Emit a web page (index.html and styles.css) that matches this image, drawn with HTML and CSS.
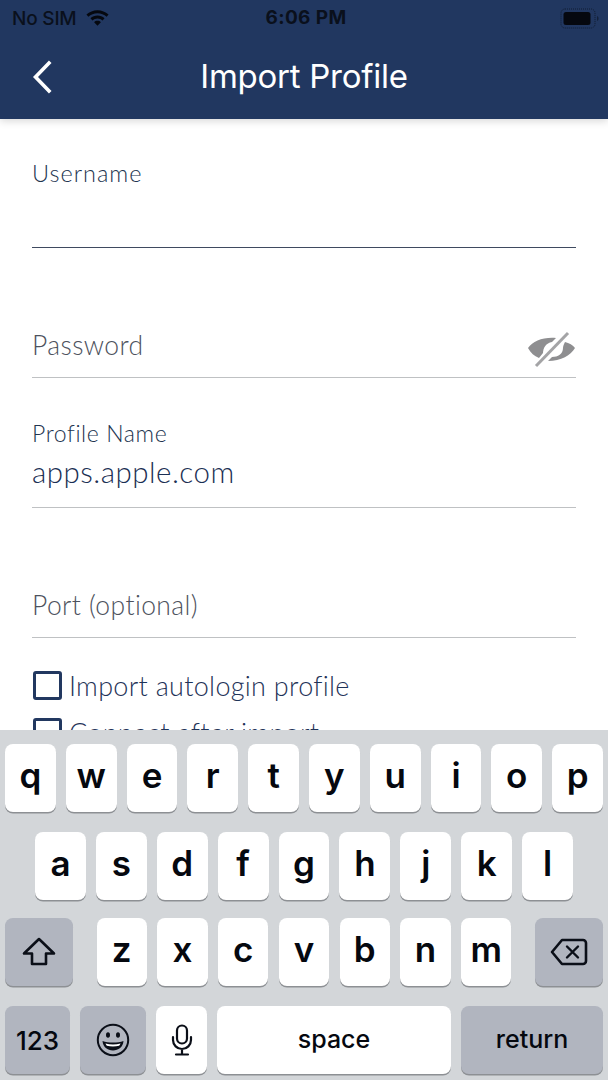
FILE: index.html
```html
<!DOCTYPE html>
<html lang="en">
<head>
<meta charset="utf-8">
<title>Import Profile</title>
<link rel="stylesheet" href="styles.css">
</head>
<body>
<div class="screen">
  <header class="header">
    <div class="status">
      <div class="status-left">
        <span>No SIM</span>
        <svg class="wifi" viewBox="0 0 26 20"><path d="M13 3C8.600 3 4.700 4.700 1.500 7.500L3.500 9.800C6.100 7.400 9.400 6 13 6s6.900 1.400 9.500 3.800l2-2.300C21.300 4.700 17.400 3 13 3zM13 8.500c-2.800 0-5.300 1-7.300 2.800l2 2.300c1.400-1.300 3.300-2.100 5.300-2.100s3.900.8 5.300 2.100l2-2.300c-2-1.800-4.500-2.800-7.300-2.800zM13 14c-1.400 0-2.600.5-3.500 1.400L13 19l3.500-3.600C15.600 14.500 14.400 14 13 14z"/></svg>
      </div>
      <span class="status-time">6:06 PM</span>
      <svg class="battery" viewBox="0 0 40 21"><rect x="1" y="1" width="34" height="19" rx="4" fill="none" stroke="#0a1220" stroke-width="1" stroke-dasharray="1 1" opacity=".7"/><rect x="3.500" y="4" width="27" height="13" rx="2.500" fill="#05080f"/><path d="M37 8v5c1-.4 1.500-1.200 1.500-2.500S38 8.400 37 8z" fill="#0a1220" opacity=".6"/></svg>
    </div>
    <div class="nav">
      <svg class="back" viewBox="0 0 20 34"><path d="M17 3 3.500 17 17 31" fill="none" stroke="#fff" stroke-width="3.600" stroke-linecap="square"/></svg>
      <h1 class="title">Import Profile</h1>
    </div>
  </header>

  <main class="form">
    <div class="field field-active">
      <span class="label">Username</span>
    </div>
    <div class="field">
      <span class="placeholder">Password</span>
      <svg class="eye" viewBox="0 0 48 38"><path d="M0 18C5 11 15 7 28 8L24 12C18 13 15 18 15 23L11 28C6 26 3 23 0 18z" fill="#8e8e90"/><path d="M37 12C41 13 45 15 47 18C43 25 33 31 20 31L24 27C30 27 35 24 35 18C35 16 36 14 37 12z" fill="#8e8e90"/><path d="M40 3 8 36" stroke="#a4a4a6" stroke-width="3" fill="none"/></svg>
    </div>
    <div class="field">
      <span class="label label-profile">Profile Name</span>
      <span class="value">apps.apple.com</span>
    </div>
    <div class="field">
      <span class="placeholder">Port (optional)</span>
    </div>
    <label class="check"><span class="box"></span>Import autologin profile</label>
    <label class="check"><span class="box"></span>Connect after import</label>
  </main>

  <section class="keyboard">
    <div class="row row-top">
      <div class="key">q</div><div class="key">w</div><div class="key">e</div><div class="key">r</div><div class="key">t</div><div class="key">y</div><div class="key">u</div><div class="key">i</div><div class="key">o</div><div class="key">p</div>
    </div>
    <div class="row row-mid">
      <div class="key">a</div><div class="key">s</div><div class="key">d</div><div class="key">f</div><div class="key">g</div><div class="key">h</div><div class="key">j</div><div class="key">k</div><div class="key">l</div>
    </div>
    <div class="row row-low">
      <div class="key key-dark key-shift">
        <svg class="ico-shift" viewBox="0 0 34 30"><path d="M17 2 2 16.500h8V27h14V16.500h8z" fill="none" stroke="#0b0f18" stroke-width="2.600" stroke-linejoin="round"/></svg>
      </div>
      <div class="letters">
        <div class="key">z</div><div class="key">x</div><div class="key">c</div><div class="key">v</div><div class="key">b</div><div class="key">n</div><div class="key">m</div>
      </div>
      <div class="key key-dark key-shift">
        <svg class="ico-del" viewBox="0 0 38 28"><path d="M12 2h21a3 3 0 0 1 3 3v18a3 3 0 0 1-3 3H12L2 14z" fill="none" stroke="#0b0f18" stroke-width="2.600" stroke-linejoin="round"/><path d="M17 8.500 28 19.500M28 8.500 17 19.500" stroke="#0b0f18" stroke-width="2.400" stroke-linecap="round"/></svg>
      </div>
    </div>
    <div class="row row-bottom">
      <div class="key key-dark key-num">123</div>
      <div class="key key-dark key-emoji">
        <svg class="ico-emoji" viewBox="0 0 34 34"><circle cx="17" cy="17" r="15.200" fill="none" stroke="#0b0f18" stroke-width="2"/><ellipse cx="12" cy="12" rx="2" ry="2.800" fill="#0b0f18"/><ellipse cx="22" cy="12" rx="2" ry="2.800" fill="#0b0f18"/><path d="M6.500 18c3 1 6.500 1.500 10.500 1.500S24.500 19 27.500 18C27 24 22.500 27.500 17 27.500S7 24 6.500 18z" fill="#0b0f18"/><path d="M9.500 20.500c2.300.6 4.800.9 7.500.9s5.200-.3 7.500-.9c-.3 1-.8 1.700-1.400 2.300-1.800.4-3.900.6-6.100.6s-4.300-.2-6.100-.6c-.6-.6-1.100-1.300-1.400-2.300z" fill="#fff"/></svg>
      </div>
      <div class="key key-mic">
        <svg class="ico-mic" viewBox="0 0 22 32"><rect x="6" y="1.500" width="10" height="18" rx="5" fill="none" stroke="#0b0f18" stroke-width="2.200"/><path d="M2 13v3a9 9 0 0 0 18 0v-3M11 25v5M5 30.500h12" fill="none" stroke="#0b0f18" stroke-width="2.200" stroke-linecap="round"/></svg>
      </div>
      <div class="key key-space">space</div>
      <div class="key key-dark key-return">return</div>
    </div>
  </section>
</div>
</body>
</html>
```
FILE: styles.css
```css
* { box-sizing: border-box; }
html, body { margin: 0; padding: 0; background: #fff; }
body { font-family: "Lato", "Open Sans", sans-serif; }

.screen {
  width: 608px;
  height: 1080px;
  display: flex;
  flex-direction: column;
  overflow: hidden;
}

.header {
  height: 119px;
  flex: none;
  background: #213760;
  box-shadow: 0 2px 8px rgba(0, 0, 0, .16);
  position: relative;
  z-index: 1;
}

.status {
  height: 36px;
  padding: 0 8px 0 12px;
  display: grid;
  grid-template-columns: 1fr auto 1fr;
  align-items: center;
  color: #0a101c;
  font-family: "Inter", sans-serif;
}
.status-left { display: flex; align-items: center; gap: 8px; font-size: 19px; font-weight: 500; letter-spacing: -.2px; }
.status-time { font-weight: 700; font-size: 19px; letter-spacing: .4px; margin-top: -1px; }
.wifi { width: 25px; height: 20px; fill: #05080f; margin-top: -3px; }
.battery { width: 40px; height: 21px; justify-self: end; }

.nav {
  height: 83px;
  display: flex;
  align-items: center;
  justify-content: center;
  position: relative;
  padding-bottom: 3px;
}
.back { position: absolute; left: 32px; top: 24px; width: 20px; height: 34px; }
.title {
  margin: 0;
  color: #fff;
  font-family: "Inter", sans-serif;
  font-weight: 400;
  font-size: 33px;
  letter-spacing: -.25px;
}

.form {
  flex: 1;
  min-height: 0;
  overflow: hidden;
  padding: 0 32px;
  color: #1b2f54;
}
.field {
  height: 130px;
  border-bottom: 1px solid #bfc1c3;
  position: relative;
  display: flex;
  flex-direction: column;
  justify-content: flex-end;
}
.field:first-child { height: 129px; }
.field-active { border-bottom-color: #3f4a60; justify-content: flex-start; padding-top: 40px; }
.label { font-size: 23px; font-weight: 300; color: #22344f; line-height: 28px; letter-spacing: .7px; }
.field-active .label { font-size: 23.500px; letter-spacing: 1px; }
.label-profile { letter-spacing: .6px; margin-bottom: 8px; }
.value { font-size: 29.500px; font-weight: 300; line-height: 34px; letter-spacing: .5px; padding-bottom: 18px; }
.placeholder { font-size: 26.500px; font-weight: 300; color: #4d525d; line-height: 32px; padding-bottom: 16px; letter-spacing: .4px; }
.eye { position: absolute; right: 0; bottom: 9px; width: 48px; height: 38px; }

.check {
  display: flex;
  align-items: center;
  gap: 7px;
  font-size: 27px;
  font-weight: 300;
  letter-spacing: .3px;
  color: #1f3358;
  height: 30px;
  margin-top: 17px;
}
.check:first-of-type { margin-top: 32px; }
.box {
  width: 29px;
  height: 29px;
  border: 3px solid #223860;
  border-radius: 3px;
  flex: none;
  margin-left: 1px;
}

.keyboard {
  height: 350px;
  flex: none;
  background: #d3d6d9;
  padding-top: 14px;
  font-family: "Inter", sans-serif;
  display: flex;
  flex-direction: column;
}
.row { display: flex; height: 68px; margin-bottom: 20px; gap: 10px; }
.row-top { padding: 0 5px; }
.row-mid { padding: 0 35px; }
.row-low { padding: 0 5px; gap: 23.500px; margin-top: -2px; }
.row-bottom { padding: 0 5px; margin-bottom: 0; }
.letters { flex: 1; display: flex; gap: 10.300px; }

.key {
  flex: 1;
  min-width: 0;
  background: #fff;
  border-radius: 8px;
  box-shadow: 0 1.500px 0 #8d9094;
  display: flex;
  align-items: center;
  justify-content: center;
  color: #05080f;
  font-size: 35px;
  font-weight: 600;
  padding-bottom: 7px;
}
.key-dark { background: #b1b5bf; }
.key-shift { flex: none; width: 68px; padding-bottom: 0; }
.key-num { flex: none; width: 65px; font-size: 26px; font-weight: 500; padding-bottom: 0; }
.key-emoji { flex: none; width: 66px; padding-bottom: 0; }
.key-mic { flex: none; width: 51px; padding-bottom: 0; }
.key-space { flex: none; width: 234px; font-size: 25px; font-weight: 500; padding-bottom: 2px; }
.key-return { flex: none; width: 142px; font-size: 25px; font-weight: 500; padding-bottom: 2px; }
.ico-shift { width: 34px; height: 30px; }
.ico-del { width: 38px; height: 28px; }
.ico-emoji { width: 34px; height: 34px; }
.ico-mic { width: 22px; height: 32px; }
```
